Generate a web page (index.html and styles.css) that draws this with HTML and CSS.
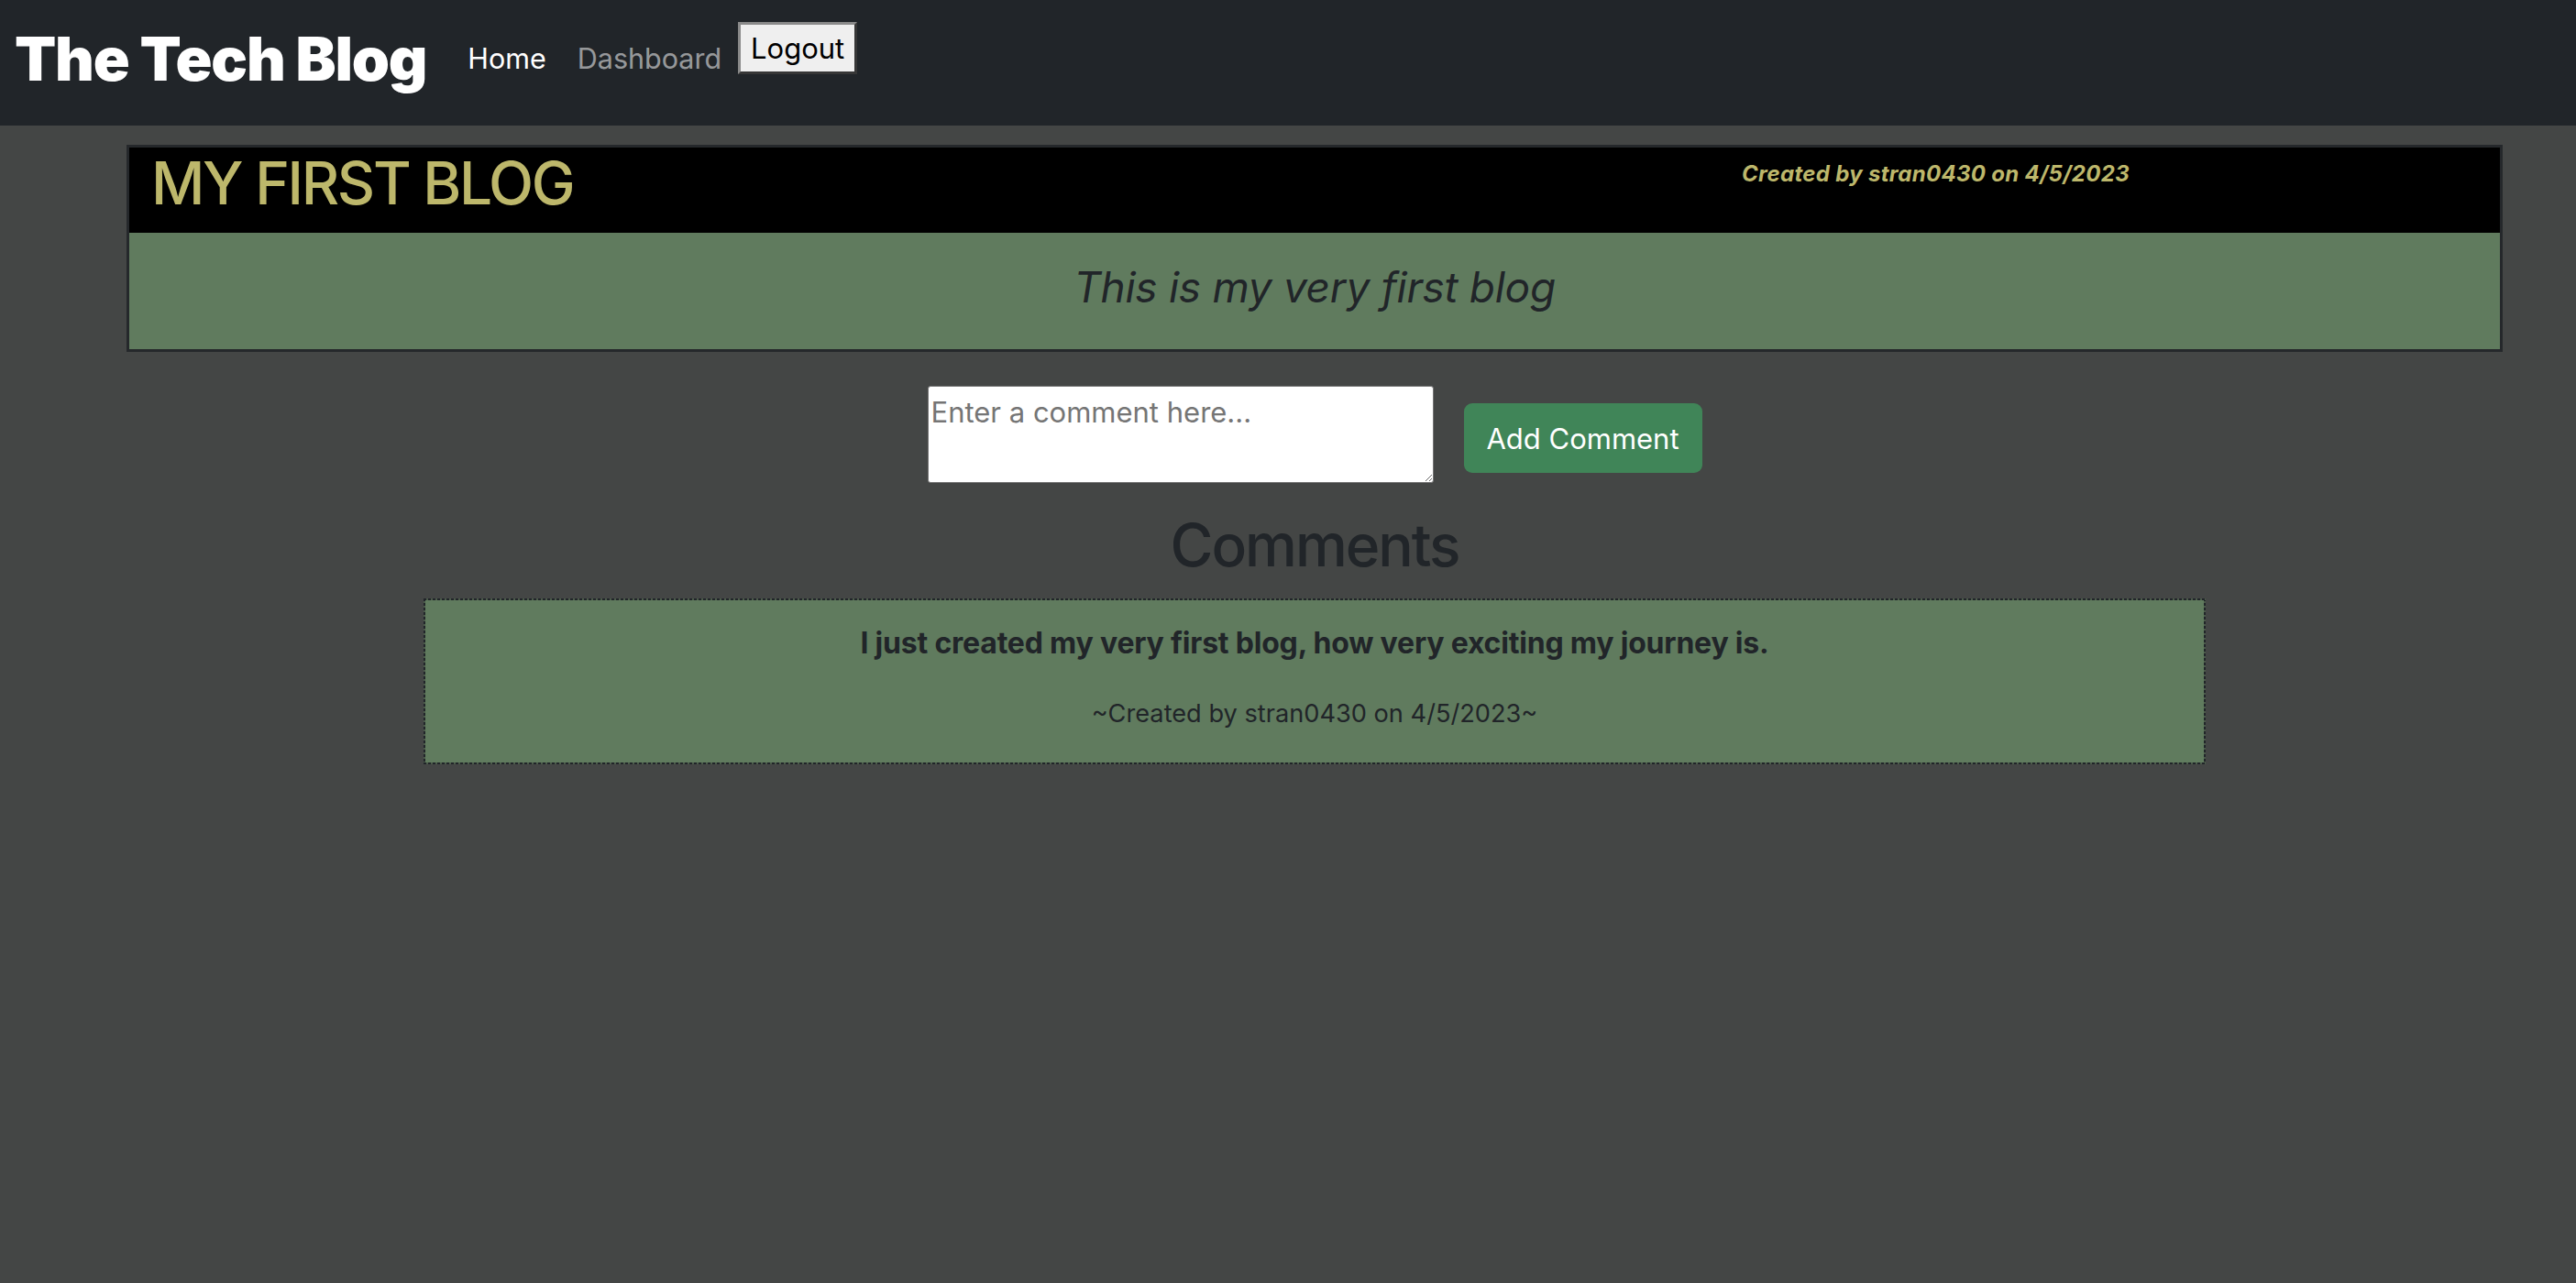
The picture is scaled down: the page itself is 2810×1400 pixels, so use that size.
FILE: index.html
```html
<!DOCTYPE html>
<html lang="en">
<head>
<meta charset="utf-8">
<title>The Tech Blog</title>
<link rel="stylesheet" href="styles.css">
</head>
<body>
<header class="navbar">
  <h1 class="brand">The Tech Blog</h1>
  <nav class="nav">
    <a class="nav-link active" href="#">Home</a>
    <a class="nav-link" href="#">Dashboard</a>
  </nav>
  <button class="logout" type="button">Logout</button>
</header>
<main class="page">
  <article class="post">
    <div class="post-head">
      <h2 class="post-title">MY FIRST BLOG</h2>
      <p class="post-meta">Created by stran0430 on 4/5/2023</p>
    </div>
    <div class="post-body">
      <p class="post-text">This is my very first blog</p>
    </div>
  </article>
  <form class="comment-form">
    <textarea class="comment-input" placeholder="Enter a comment here..."></textarea>
    <button class="btn-add" type="button">Add Comment</button>
  </form>
  <h2 class="comments-title">Comments</h2>
  <section class="comment">
    <p class="comment-text">I just created my very first blog, how very exciting my journey is.</p>
    <p class="comment-meta">~Created by stran0430 on 4/5/2023~</p>
  </section>
</main>
</body>
</html>
```
FILE: styles.css
```css
* { box-sizing: border-box; }
html, body { height: 100%; }
body {
  margin: 0;
  background: #444645;
  font-family: Inter, "Noto Sans", "Liberation Sans", sans-serif;
  color: #212529;
}
.navbar {
  height: 137px;
  background: #212529;
  display: flex;
  align-items: flex-start;
  padding-left: 16px;
}
.brand {
  margin: 24px 0 0;
  font-size: 66px;
  font-weight: 900;
  line-height: normal;
  color: #fff;
  letter-spacing: -1.2px;
}
.nav {
  display: flex;
  gap: 34px;
  margin: 45px 0 0 45px;
}
.nav-link {
  font-size: 30.5px;
  line-height: normal;
  text-decoration: none;
  color: rgba(255,255,255,0.55);
}
.nav-link.active { color: #fff; }
.logout {
  margin: 24px 0 0 18px;
  width: 130px;
  height: 57px;
  padding: 0;
  font-family: inherit;
  font-size: 31px;
  color: #000;
  background: #efefef;
  border: 3px outset #8a8a8a;
}
.page {
  margin: 21px 80px 0 138px;
}
.post {
  border: 3px solid #25282b;
}
.post-head {
  background: #000;
  display: grid;
  grid-template-columns: 1759px 1fr;
  height: 93px;
}
.post-title {
  margin: 0;
  padding-left: 24px;
  font-size: 64px;
  font-weight: 500;
  line-height: normal;
  letter-spacing: -2.3px;
  color: #bdb76b;
}
.post-meta {
  margin: 14px 0 0;
  font-size: 24px;
  font-weight: 700;
  font-style: italic;
  line-height: normal;
  letter-spacing: 0.3px;
  color: #bdb76b;
}
.post-body {
  background: #607b5e;
  height: 127px;
  padding-top: 31px;
}
.post-text {
  margin: 0;
  text-align: center;
  font-size: 46px;
  font-style: italic;
  line-height: normal;
  letter-spacing: -0.3px;
  color: #212529;
}
.comment-form {
  display: flex;
  justify-content: center;
  align-items: center;
  gap: 33px;
  margin-top: 37px;
}
.comment-input {
  width: 552px;
  height: 106px;
  padding: 9px 2px 2px 3px;
  font-family: inherit;
  font-size: 31px;
  line-height: normal;
  border: 1px solid #767676;
  border-radius: 3px;
  background: #fff;
}
.comment-input::placeholder { color: #757575; }
.btn-add {
  margin-top: 8px;
  width: 260px;
  height: 76px;
  font-family: inherit;
  font-size: 31px;
  color: #fff;
  background: #408558;
  border: none;
  border-radius: 9px;
}
.comments-title {
  margin: 29px 0 0;
  text-align: center;
  font-size: 64px;
  font-weight: 500;
  line-height: normal;
  letter-spacing: -2px;
  color: #212529;
}
.comment {
  width: 75%;
  margin: 20px auto 0;
  padding: 29px 2px 39px;
  text-align: center;
  background:
    repeating-linear-gradient(90deg, #212529 0 3px, #4a5a49 3px 5px) top left / 100% 2px no-repeat,
    repeating-linear-gradient(90deg, #212529 0 3px, #4a5a49 3px 5px) bottom left / 100% 2px no-repeat,
    repeating-linear-gradient(180deg, #212529 0 3px, #4a5a49 3px 5px) top left / 2px 100% no-repeat,
    repeating-linear-gradient(180deg, #212529 0 3px, #4a5a49 3px 5px) top right / 2px 100% no-repeat,
    #607b5e;
}
.comment-text {
  margin: 0;
  font-size: 32px;
  font-weight: 700;
  line-height: normal;
  letter-spacing: -0.2px;
}
.comment-meta {
  margin: 41px 0 0;
  font-size: 27.2px;
  line-height: normal;
}
```
